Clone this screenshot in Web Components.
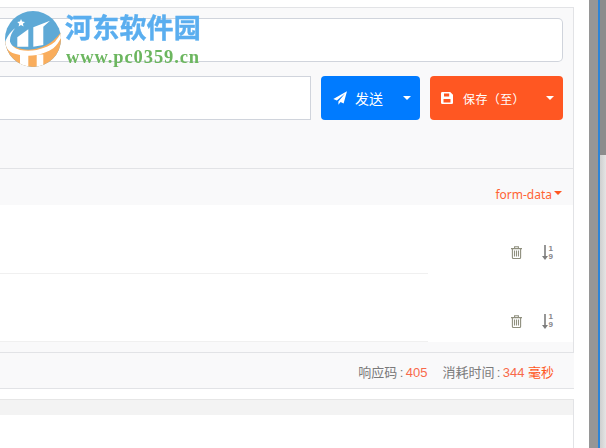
<!DOCTYPE html>
<html lang="zh">
<head>
<meta charset="utf-8">
<style>
  html, body { margin: 0; height: 100%; background: #fff; overflow: hidden; }
  body { font-family: "Liberation Sans", "Noto Sans CJK SC", sans-serif; }
</style>
</head>
<body>
<template id="req-button-tpl">
  <style>
    :host { display: flex; align-items: center; height: 44px; border-radius: 4px; color: #fff; font-size: 14px; box-sizing: border-box; background: var(--btn-bg, #007bff); padding: 0 var(--btn-pad-r, 12px) 0 var(--btn-pad-l, 12px); }
    .label { margin-left: var(--btn-gap, 8px); letter-spacing: var(--btn-ls, 0); font-size: var(--btn-fs, 14px); flex: 1; white-space: nowrap; }
    .caret { width: 0; height: 0; border-left: 4px solid transparent; border-right: 4px solid transparent; border-top: 4px solid #fff; }
    ::slotted(svg) { display: block; flex: none; }
  </style>
  <slot name="icon"></slot><span class="label"><slot></slot></span><span class="caret"></span>
</template>

<template id="row-tools-tpl">
  <style>
    :host { display: flex; align-items: center; gap: 20px; height: 68px; box-sizing: border-box; padding: 27px 20px 0 0; justify-content: flex-end; }
    svg { display: block; }
    .sort { display: flex; align-items: center; gap: 1px; }
    .nums { display: flex; flex-direction: column; font: 700 8px/8px "Liberation Sans", sans-serif; color: #85858a; }
  </style>
  <svg width="11" height="13" viewBox="0 0 11 13" fill="none" stroke="#8f8f7e" stroke-width="1.1">
    <path d="M0 2.6h11M3.6 2.6V.7h3.8v1.9M1.400 2.600v8.900q0 1 1 1h6.200q1 0 1-1V2.600"/>
    <path d="M3.500 4.600v6M5.500 4.600v6M7.500 4.600v6"/>
  </svg>
  <div class="sort">
    <svg width="6" height="15" viewBox="0 0 6 15" fill="#7d7d7d"><path d="M2.200 0h1.600v11H6l-3 4-3-4h2.200z"/></svg>
    <div class="nums"><span>1</span><span>9</span></div>
  </div>
</template>

<template id="api-panel-tpl">
  <style>
    :host { display: block; width: 574px; box-sizing: border-box; border-top: 1px solid #e2e3e6; border-right: 1px solid #e2e3e6; background: #f9f9fa; color: #777; }
    .url { padding: 10px 10px 0 0; }
    .box { background: #fff; border: 1px solid #d0d4dc; box-sizing: border-box; }
    .url .box { height: 44px; border-radius: 0 5px 5px 0; border-left: 0; }
    .actions { display: flex; height: 44px; margin-top: 14px; padding-right: 10px; }
    .actions .box { width: 311px; border-left: 0; height: 44px; }
    .send { width: 99px; margin-left: 10px; --btn-bg: #007bff; --btn-pad-l: 12px; --btn-pad-r: 9px; --btn-gap: 8px; --btn-fs: 14px; }
    .save { width: 133px; margin-left: 10px; --btn-bg: #ff5722; --btn-pad-l: 11px; --btn-pad-r: 9px; --btn-gap: 10px; --btn-fs: 12px; --btn-ls: 0.4px; }
    .gap { height: 48px; border-bottom: 1px solid #e2e3e6; }
    .type { height: 36px; display: flex; align-items: center; justify-content: flex-end; gap: 2px; padding: 15px 11px 0 0; box-sizing: border-box; font: 12px "Noto Sans", sans-serif; color: #ff6333; }
    .caret { width: 0; height: 0; border-left: 4px solid transparent; border-right: 4px solid transparent; border-top: 4px solid #ff5722; margin-top: -3px; }
    .rows { display: flex; flex-direction: column; }
    .row { background: #fff; }
    .row:last-child row-tools { height: 67px; }
    .rule { width: 428px; height: 1px; background: #f0f0f0; }
    .foot { height: 10px; border-bottom: 1px solid #e2e3e6; }
  </style>
  <div class="url"><div class="box"></div></div>
  <div class="actions">
    <div class="box"></div>
    <req-button class="send">
      <svg slot="icon" width="14" height="14" viewBox="0 0 14 14" fill="#fff"><path d="M14 0.2 0.3 8l3.6 1.5L12 2.6 5.4 10.4v3.4l2.2-2.7 3 1.3z"/></svg>
      发送
    </req-button>
    <req-button class="save">
      <svg slot="icon" width="12" height="12" viewBox="0 0 12 12"><path fill="#fff" fill-rule="evenodd" d="M1.2 0h8L12 2.8v8A1.2 1.2 0 0 1 10.8 12H1.2A1.2 1.2 0 0 1 0 10.8V1.2A1.2 1.2 0 0 1 1.2 0zM3 1.500v3h5.200v-3zM2.500 7v3.500h7V7z"/></svg>
      保存（至）
    </req-button>
  </div>
  <div class="gap"></div>
  <div class="type"><span>form-data</span><span class="caret"></span></div>
  <div class="rows">
    <div class="row"><row-tools></row-tools><div class="rule"></div></div>
    <div class="row"><row-tools></row-tools><div class="rule"></div></div>
  </div>
  <div class="foot"></div>
</template>

<template id="status-bar-tpl">
  <style>
    :host { display: flex; justify-content: flex-end; align-items: center; width: 574px; height: 36px; box-sizing: border-box; padding: 1px 20px 0 0; background: #f9f9fa; border-bottom: 1px solid #e2e3e6; font-size: 13px; color: #7a7a7a; white-space: nowrap; word-spacing: -1.2px; }
    b { font-weight: 400; color: #f8694a; }
    i { font-style: normal; color: #ff5722; margin-left: 1px; }
    .item + .item { margin-left: 15px; }
  </style>
  <span class="item">响应码 : <b>405</b></span>
  <span class="item">消耗时间 : <b>344</b> <i>毫秒</i></span>
</template>

<template id="result-panel-tpl">
  <style>
    :host { display: block; width: 574px; box-sizing: border-box; margin-top: 10px; height: 49px; border-top: 1px solid #e6e6e6; border-right: 1px solid #e2e3e6; background: #fff; }
    .head { height: 15px; background: #f3f3f3; }
  </style>
  <div class="head"></div>
</template>

<template id="site-mark-tpl">
  <style>
    :host { position: absolute; left: 5px; top: 11px; display: flex; gap: 4px; pointer-events: none; filter: blur(0.35px); }
    svg { display: block; flex: none; }
    .words { display: flex; flex-direction: column; width: 138px; }
    .cn { font: 700 27px/32px "Noto Sans CJK SC", sans-serif; color: #5aaeef; white-space: nowrap; -webkit-text-stroke: 0.4px #5aaeef; margin-left: -1px; letter-spacing: 0.2px; }
    .url { font: 700 18.5px/22px "Liberation Serif", serif; color: #6cb65f; white-space: nowrap; letter-spacing: 0.9px; margin-top: 3px; }
  </style>
  <svg width="57" height="56" viewBox="0 0 57 56">
    <defs><clipPath id="c"><circle cx="28" cy="28" r="28"/></clipPath></defs>
    <g clip-path="url(#c)">
      <rect width="57" height="56" fill="#5ea9d6"/>
      <path d="M0 30C14 42 40 44 57 20v36H0z" fill="#f9ad5c"/>
      <path d="M0 32.300C1 27 5 21 10 17.300 7 21 4.500 26 5 30.700 7 36 12 38 15 39 20 40 26 40 31.700 39 40 37 46 34 50 30.700 53 27 55 24 56.700 20.700V25.700C54 31 52 34 48.300 37.300 43 41 37 43 31.700 44 26 45 20 45 15 44 9 43 5 41 3.300 39 1 36 .3 34 0 32.300z" fill="#fff"/>
      <path d="M12.300 35.700V26.300L23.300 18.300V35.700z" fill="#fff"/>
      <path d="M28.300 35.700V16.300L45 9.700 38.300 15.700V34z" fill="#fff"/>
      <path d="M15 44h8.300v12H15zM31.700 43.500h6.600V56h-6.600z" fill="#fff"/>
      <path d="M16 8l1.200 2.600 2.800.3-2.100 1.800.7 2.700-2.600-1.500-2.400 1.500.6-2.700-2-1.800 2.700-.3z" fill="#fff"/>
    </g>
  </svg>
  <div class="words">
    <span class="cn">河东软件园</span>
    <span class="url">www.pc0359.cn</span>
  </div>
</template>

<template id="window-edge-tpl">
  <style>
    :host { position: absolute; top: 0; bottom: 0; left: 589px; right: 0; display: flex; }
    .bar { width: 9px; background: #969696; }
    .line { width: 2px; background: #2b84d8; }
    .fade { flex: 1; display: flex; flex-direction: column; }
    .top { height: 155px; background: #8c8c8c; }
    .low { flex: 1; background: linear-gradient(90deg, #cfcfcf, #e4e4e4); }
  </style>
  <div class="bar"></div><div class="line"></div>
  <div class="fade"><div class="top"></div><div class="low"></div></div>
</template>

<api-panel style="margin-top:7px"></api-panel>
<status-bar></status-bar>
<result-panel></result-panel>
<window-edge></window-edge>
<site-mark></site-mark>

<script>
const fromTemplate = id => class extends HTMLElement {
    connectedCallback() {
        if (this.shadowRoot) return;
        this.attachShadow({ mode: 'open' });
        this.shadowRoot.appendChild(document.getElementById(id).content.cloneNode(true));
    }
};

customElements.define('req-button', fromTemplate('req-button-tpl'));
customElements.define('row-tools', fromTemplate('row-tools-tpl'));
customElements.define('api-panel', fromTemplate('api-panel-tpl'));
customElements.define('status-bar', fromTemplate('status-bar-tpl'));
customElements.define('result-panel', fromTemplate('result-panel-tpl'));
customElements.define('site-mark', fromTemplate('site-mark-tpl'));
customElements.define('window-edge', fromTemplate('window-edge-tpl'));
</script>
</body>
</html>
